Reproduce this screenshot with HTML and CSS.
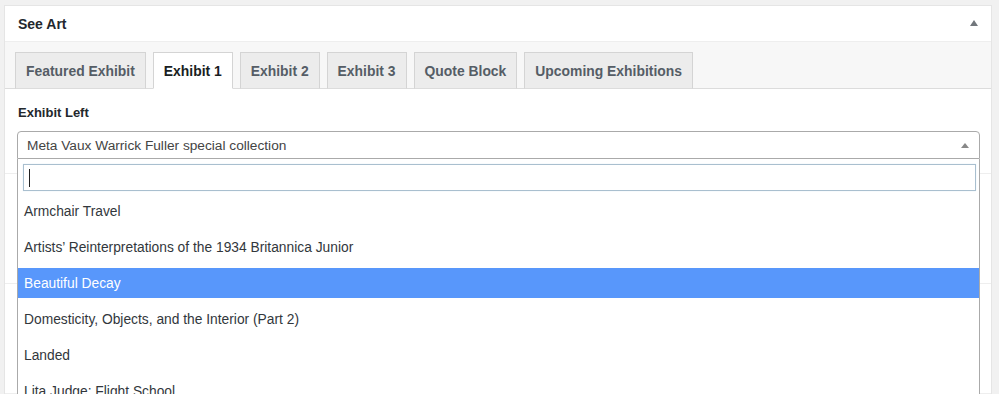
FILE: index.html
```html
<!DOCTYPE html>
<html lang="en">
<head>
  <meta charset="UTF-8">
  <meta name="viewport" content="width=device-width, initial-scale=1.0">
  <title>See Art</title>
  <link rel="stylesheet" href="styles.css">
</head>
<body>
  <div class="postbox">
    <div class="postbox-header">
      <h2>See Art</h2>
      <span class="toggle"></span>
    </div>

    <div class="tabs">
      <div class="tab">Featured Exhibit</div>
      <div class="tab active">Exhibit 1</div>
      <div class="tab">Exhibit 2</div>
      <div class="tab">Exhibit 3</div>
      <div class="tab">Quote Block</div>
      <div class="tab">Upcoming Exhibitions</div>
    </div>

    <div class="field">
      <label>Exhibit Left</label>
      <div class="select-wrap">
        <div class="select">
          <span>Meta Vaux Warrick Fuller special collection</span>
          <span class="arrow"></span>
        </div>
        <div class="dropdown">
          <div class="search"><span class="caret"></span></div>
          <ul class="options">
            <li>Armchair Travel</li>
            <li>Artists’ Reinterpretations of the 1934 Britannica Junior</li>
            <li class="highlighted">Beautiful Decay</li>
            <li>Domesticity, Objects, and the Interior (Part 2)</li>
            <li>Landed</li>
            <li>Lita Judge: Flight School</li>
            <li>Meta Vaux Warrick Fuller special collection</li>
          </ul>
        </div>
      </div>
    </div>

    <div class="field field-tall"></div>
    <div class="field field-tall"></div>
  </div>
</body>
</html>
```

FILE: styles.css
```css
body {
  margin: 0;
  padding: 5px 7px 0 4px;
  background: #f1f1f1;
  font-family: 'Liberation Sans', Arial, sans-serif;
  color: #32373c;
  overflow: hidden;
}

.postbox {
  background: white;
  border: 1px solid #e5e5e5;
}

.postbox-header {
  display: flex;
  align-items: center;
  justify-content: space-between;
  height: 35px;
  border-bottom: 1px solid #eee;
  padding: 0 13px;
}

.postbox-header h2 {
  margin: 0;
  font-size: 14px;
  font-weight: bold;
  color: #23282d;
}

.toggle {
  width: 0;
  height: 0;
  border-left: 4px solid transparent;
  border-right: 4px solid transparent;
  border-bottom: 6px solid #72777c;
  margin-right: 0;
  margin-top: -1px;
}

.tabs {
  display: flex;
  gap: 7px;
  padding: 10px 10px 0;
  background: #f7f7f7;
  border-bottom: 1px solid #dcdcdc;
}

.tab {
  height: 35px;
  line-height: 36px;
  padding: 0 10px;
  margin-bottom: -1px;
  font-size: 13.9px;
  font-weight: bold;
  color: #555d66;
  background: #ececec;
  border: 1px solid #d4d4d4;
  border-bottom-color: #dcdcdc;
}

.tab.active {
  background: white;
  color: #191e23;
  border-bottom-color: white;
}

.field {
  padding: 15px 11px 14px 12px;
  border-bottom: 1px solid #eee;
}

.field-tall {
  height: 80px;
}

.field label {
  display: block;
  font-size: 13px;
  font-weight: bold;
  line-height: 18px;
  color: #23282d;
  margin: 0 0 9px 1px;
}

.select-wrap {
  position: relative;
}

.select {
  display: flex;
  align-items: center;
  justify-content: space-between;
  height: 26px;
  padding: 0 10px 0 9px;
  font-size: 13.7px;
  color: #444;
  border: 1px solid #aaa;
  border-radius: 4px 4px 0 0;
}

.arrow {
  width: 0;
  height: 0;
  border-left: 4px solid transparent;
  border-right: 4px solid transparent;
  border-bottom: 5px solid #888;
}

.dropdown {
  position: absolute;
  top: 100%;
  left: 0;
  right: 0;
  background: white;
  border: 1px solid #aaa;
  border-top: none;
  z-index: 10;
}

.search {
  display: flex;
  align-items: center;
  height: 25px;
  margin: 5px 3px 0 5px;
  border: 1px solid #a9bfcf;
  box-shadow: 0 0 1px #d6e6f2;
  padding-left: 5px;
}

.caret {
  width: 1px;
  height: 18px;
  background: #222;
}

.options {
  list-style: none;
  margin: 5px 0 0;
  padding: 0;
}

.options li {
  height: 30px;
  line-height: 31px;
  padding: 0 6px;
  margin-bottom: 6px;
  font-size: 13.8px;
  color: #32373c;
}

.options li.highlighted {
  background: #5897fb;
  color: white;
}
```
